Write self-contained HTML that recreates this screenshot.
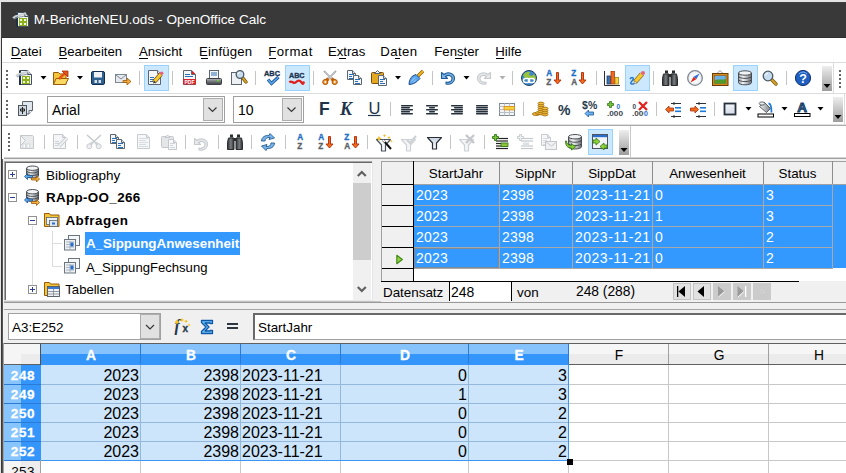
<!DOCTYPE html>
<html><head><meta charset="utf-8">
<style>
*{margin:0;padding:0;box-sizing:border-box}
html,body{width:846px;height:473px;overflow:hidden;background:#e4e4e4;font-family:"Liberation Sans",sans-serif;color:#000}
.a{position:absolute}
.t{position:absolute;white-space:pre;line-height:1}
svg.ov{position:absolute;left:0;top:0;width:846px;height:473px;overflow:visible}
</style></head><body>
<div class="a" style="left:0px;top:0px;width:846px;height:473px;background:#e4e4e4;"></div>
<div class="a" style="left:1px;top:2px;width:845px;height:471px;background:#404040;"></div>
<div class="a" style="left:2px;top:3px;width:844px;height:34px;background:#393939;"></div>
<div class="a" style="left:2px;top:37px;width:844px;height:1px;background:#2e2e2e;"></div>
<div class="t" style="left:33.8px;top:13.29px;font-size:13.6px;font-weight:400;color:#ffffff;letter-spacing:0.02px;">M-BerichteNEU.ods - OpenOffice Calc</div>
<div class="a" style="left:2px;top:38px;width:844px;height:435px;background:#ffffff;"></div>
<div id="menu">
<div class="t" style="left:10.8px;top:44.73px;font-size:13.2px;font-weight:400;color:#000;">Datei</div>
<div class="t" style="left:58.4px;top:44.73px;font-size:13.2px;font-weight:400;color:#000;">Bearbeiten</div>
<div class="t" style="left:138.9px;top:44.73px;font-size:13.2px;font-weight:400;color:#000;">Ansicht</div>
<div class="t" style="left:199px;top:44.73px;font-size:13.2px;font-weight:400;color:#000;letter-spacing:0.15px;">Einfügen</div>
<div class="t" style="left:268.3px;top:44.73px;font-size:13.2px;font-weight:400;color:#000;letter-spacing:0.45px;">Format</div>
<div class="t" style="left:327.9px;top:44.73px;font-size:13.2px;font-weight:400;color:#000;">Extras</div>
<div class="t" style="left:380.3px;top:44.73px;font-size:13.2px;font-weight:400;color:#000;letter-spacing:0.4px;">Daten</div>
<div class="t" style="left:434.3px;top:44.73px;font-size:13.2px;font-weight:400;color:#000;">Fenster</div>
<div class="t" style="left:495.3px;top:44.73px;font-size:13.2px;font-weight:400;color:#000;">Hilfe</div>
</div>
<div class="a" style="left:11px;top:57.5px;width:10px;height:1px;background:#000;"></div>
<div class="a" style="left:58.5px;top:57.5px;width:8.0px;height:1px;background:#000;"></div>
<div class="a" style="left:139px;top:57.5px;width:8.5px;height:1px;background:#000;"></div>
<div class="a" style="left:200.5px;top:57.5px;width:7.0px;height:1px;background:#000;"></div>
<div class="a" style="left:269px;top:57.5px;width:7px;height:1px;background:#000;"></div>
<div class="a" style="left:339px;top:57.5px;width:7px;height:1px;background:#000;"></div>
<div class="a" style="left:395px;top:57.5px;width:5px;height:1px;background:#000;"></div>
<div class="a" style="left:455px;top:57.5px;width:7px;height:1px;background:#000;"></div>
<div class="a" style="left:495.5px;top:57.5px;width:8.5px;height:1px;background:#000;"></div>
<div class="a" style="left:2px;top:62px;width:844px;height:1px;background:#dcdcdc;"></div>
<div class="a" style="left:2px;top:93px;width:844px;height:1px;background:#dcdcdc;"></div>
<div class="a" style="left:2px;top:124px;width:844px;height:1px;background:#e0e0e0;"></div>
<div class="a" style="left:2px;top:125px;width:844px;height:1px;background:#ababab;"></div>
<div class="a" style="left:4px;top:157px;width:842px;height:1px;background:#d4d4d4;"></div>
<div class="a" style="left:4px;top:158px;width:842px;height:1px;background:#a0a0a0;"></div>
<div class="a" style="left:833px;top:63px;width:1px;height:30px;background:#dcdcdc;"></div>
<div class="a" style="left:844px;top:94px;width:1px;height:30px;background:#dcdcdc;"></div>
<div class="a" style="left:630px;top:126px;width:1px;height:31px;background:#c8c8c8;"></div>
<div class="a" style="left:6px;top:70px;width:2px;height:2px;background:#666;"></div>
<div class="a" style="left:6px;top:74px;width:2px;height:2px;background:#666;"></div>
<div class="a" style="left:6px;top:78px;width:2px;height:2px;background:#666;"></div>
<div class="a" style="left:6px;top:82px;width:2px;height:2px;background:#666;"></div>
<div class="a" style="left:6px;top:86px;width:2px;height:2px;background:#666;"></div>
<div class="a" style="left:839px;top:70px;width:2px;height:2px;background:#666;"></div>
<div class="a" style="left:839px;top:74px;width:2px;height:2px;background:#666;"></div>
<div class="a" style="left:839px;top:78px;width:2px;height:2px;background:#666;"></div>
<div class="a" style="left:839px;top:82px;width:2px;height:2px;background:#666;"></div>
<div class="a" style="left:839px;top:86px;width:2px;height:2px;background:#666;"></div>
<div class="a" style="left:6px;top:100px;width:2px;height:2px;background:#666;"></div>
<div class="a" style="left:6px;top:104px;width:2px;height:2px;background:#666;"></div>
<div class="a" style="left:6px;top:108px;width:2px;height:2px;background:#666;"></div>
<div class="a" style="left:6px;top:112px;width:2px;height:2px;background:#666;"></div>
<div class="a" style="left:6px;top:116px;width:2px;height:2px;background:#666;"></div>
<div class="a" style="left:8px;top:133px;width:2px;height:2px;background:#666;"></div>
<div class="a" style="left:8px;top:137px;width:2px;height:2px;background:#666;"></div>
<div class="a" style="left:8px;top:141px;width:2px;height:2px;background:#666;"></div>
<div class="a" style="left:8px;top:145px;width:2px;height:2px;background:#666;"></div>
<div class="a" style="left:8px;top:149px;width:2px;height:2px;background:#666;"></div>
<div class="a" style="left:144px;top:65px;width:25px;height:26px;background:#cce8ff;border:1px solid #99d1ff"></div>
<div class="a" style="left:285px;top:65px;width:25px;height:26px;background:#cce8ff;border:1px solid #99d1ff"></div>
<div class="a" style="left:625px;top:65px;width:25px;height:26px;background:#cce8ff;border:1px solid #99d1ff"></div>
<div class="a" style="left:733px;top:65px;width:25px;height:26px;background:#cce8ff;border:1px solid #99d1ff"></div>
<div class="a" style="left:139px;top:71px;width:1px;height:14px;background:#c4c4c4;"></div>
<div class="a" style="left:172px;top:71px;width:1px;height:14px;background:#c4c4c4;"></div>
<div class="a" style="left:255px;top:71px;width:1px;height:14px;background:#c4c4c4;"></div>
<div class="a" style="left:313px;top:71px;width:1px;height:14px;background:#c4c4c4;"></div>
<div class="a" style="left:432px;top:71px;width:1px;height:14px;background:#c4c4c4;"></div>
<div class="a" style="left:512px;top:71px;width:1px;height:14px;background:#c4c4c4;"></div>
<div class="a" style="left:596px;top:71px;width:1px;height:14px;background:#c4c4c4;"></div>
<div class="a" style="left:653px;top:71px;width:1px;height:14px;background:#c4c4c4;"></div>
<div class="a" style="left:786px;top:71px;width:1px;height:14px;background:#c4c4c4;"></div>
<div class="a" style="left:822px;top:66px;width:10px;height:25px;background:linear-gradient(#eeeeee,#9c9c9c)"></div>
<div class="a" style="left:47px;top:96px;width:178px;height:27px;border:1px solid #a0a0a0;background:#fff"></div>
<div class="a" style="left:203px;top:98px;width:20px;height:23px;border:1px solid #adadad;background:#e1e1e1"></div>
<div class="t" style="left:52px;top:102.65px;font-size:14px;font-weight:400;color:#000;">Arial</div>
<div class="a" style="left:233px;top:96px;width:71px;height:27px;border:1px solid #a0a0a0;background:#fff"></div>
<div class="a" style="left:282px;top:98px;width:20px;height:23px;border:1px solid #adadad;background:#e1e1e1"></div>
<div class="t" style="left:238px;top:102.65px;font-size:14px;font-weight:400;color:#000;">10</div>
<div class="a" style="left:390px;top:102px;width:1px;height:14px;background:#c4c4c4;"></div>
<div class="a" style="left:523px;top:102px;width:1px;height:14px;background:#c4c4c4;"></div>
<div class="a" style="left:656px;top:102px;width:1px;height:14px;background:#c4c4c4;"></div>
<div class="a" style="left:714px;top:102px;width:1px;height:14px;background:#c4c4c4;"></div>
<div class="a" style="left:833px;top:97px;width:10px;height:25px;background:linear-gradient(#eeeeee,#9c9c9c)"></div>
<div class="a" style="left:588px;top:129px;width:25px;height:26px;background:#cce8ff;border:1px solid #99d1ff"></div>
<div class="a" style="left:44px;top:135px;width:1px;height:14px;background:#c4c4c4;"></div>
<div class="a" style="left:77px;top:135px;width:1px;height:14px;background:#c4c4c4;"></div>
<div class="a" style="left:185px;top:135px;width:1px;height:14px;background:#c4c4c4;"></div>
<div class="a" style="left:218px;top:135px;width:1px;height:14px;background:#c4c4c4;"></div>
<div class="a" style="left:251px;top:135px;width:1px;height:14px;background:#c4c4c4;"></div>
<div class="a" style="left:285px;top:135px;width:1px;height:14px;background:#c4c4c4;"></div>
<div class="a" style="left:367px;top:135px;width:1px;height:14px;background:#c4c4c4;"></div>
<div class="a" style="left:450px;top:135px;width:1px;height:14px;background:#c4c4c4;"></div>
<div class="a" style="left:484px;top:135px;width:1px;height:14px;background:#c4c4c4;"></div>
<div class="a" style="left:619px;top:130px;width:10px;height:25px;background:linear-gradient(#eeeeee,#9c9c9c)"></div>
<div class="a" style="left:3px;top:159px;width:843px;height:149px;background:#f0f0f0;"></div>
<div class="a" style="left:4px;top:161px;width:369px;height:140px;background:#e6e6e6;"></div>
<div class="a" style="left:4px;top:161px;width:368px;height:139px;background:#a8a8a8;"></div>
<div class="a" style="left:5px;top:162px;width:367px;height:138px;background:#696969;"></div>
<div class="a" style="left:6px;top:163px;width:366px;height:137px;background:#ffffff;"></div>
<div class="a" style="left:353px;top:163px;width:18px;height:137px;background:#f0f0f0;"></div>
<div class="a" style="left:353px;top:183px;width:18px;height:77px;background:#cdcdcd;"></div>
<div class="a" style="left:373px;top:159px;width:8px;height:149px;background:#f0f0f0;"></div>
<div class="a" style="left:3px;top:301px;width:843px;height:1px;background:#c4c4c4;"></div>
<div class="a" style="left:3px;top:302px;width:843px;height:1px;background:#999999;"></div>
<div class="a" style="left:3px;top:309px;width:843px;height:1px;background:#a4a4a4;"></div>
<div class="t" style="left:45.9px;top:168.57px;font-size:13.5px;font-weight:400;color:#000;">Bibliography</div>
<div class="t" style="left:45.9px;top:190.96px;font-size:13.4px;font-weight:700;color:#000;letter-spacing:0.35px;">RApp-OO_266</div>
<div class="t" style="left:65.4px;top:214.26px;font-size:13.4px;font-weight:700;color:#000;letter-spacing:0.55px;">Abfragen</div>
<div class="a" style="left:84.7px;top:232px;width:155px;height:23px;background:#3399ff;"></div>
<div class="a" style="left:84.7px;top:232px;width:155px;height:23px;overflow:hidden">
<div class="t" style="left:1.2px;top:5.26px;font-size:13.4px;font-weight:700;color:#fff">A_SippungAnwesenheit</div>
</div>
<div class="t" style="left:85.9px;top:260.61px;font-size:13.1px;font-weight:400;color:#000;">A_SippungFechsung</div>
<div class="t" style="left:65.3px;top:282.91px;font-size:13.1px;font-weight:400;color:#000;">Tabellen</div>
<div class="a" style="left:8px;top:170px;width:9px;height:9px;border:1px solid #919191;background:#fff"></div>
<div class="a" style="left:8px;top:193px;width:9px;height:9px;border:1px solid #919191;background:#fff"></div>
<div class="a" style="left:28px;top:216px;width:9px;height:9px;border:1px solid #919191;background:#fff"></div>
<div class="a" style="left:28px;top:285px;width:9px;height:9px;border:1px solid #919191;background:#fff"></div>
<div class="a" style="left:381px;top:161px;width:465px;height:120px;background:#ffffff;"></div>
<div class="a" style="left:381px;top:161px;width:465px;height:23px;background:#f0f0f0;"></div>
<div class="a" style="left:381px;top:161px;width:32px;height:120px;background:#f0f0f0;"></div>
<div class="a" style="left:413px;top:184px;width:433px;height:21px;background:#3399ff;"></div>
<div class="a" style="left:413px;top:205px;width:433px;height:21px;background:#3399ff;"></div>
<div class="a" style="left:413px;top:226px;width:433px;height:21px;background:#3399ff;"></div>
<div class="a" style="left:413px;top:247px;width:433px;height:21px;background:#3399ff;"></div>
<div id="gridlines">
<div class="a" style="left:381px;top:161px;width:465px;height:1px;background:#a0a0a0;"></div>
<div class="a" style="left:381px;top:184px;width:465px;height:1px;background:#a0a0a0;"></div>
<div class="a" style="left:381px;top:184px;width:32px;height:1px;background:#000;"></div>
<div class="a" style="left:381px;top:205px;width:452px;height:1px;background:#a8a8a8;"></div>
<div class="a" style="left:381px;top:205px;width:32px;height:1px;background:#000;"></div>
<div class="a" style="left:381px;top:226px;width:452px;height:1px;background:#a8a8a8;"></div>
<div class="a" style="left:381px;top:226px;width:32px;height:1px;background:#000;"></div>
<div class="a" style="left:381px;top:247px;width:452px;height:1px;background:#a8a8a8;"></div>
<div class="a" style="left:381px;top:247px;width:32px;height:1px;background:#000;"></div>
<div class="a" style="left:381px;top:268px;width:452px;height:1px;background:#a8a8a8;"></div>
<div class="a" style="left:381px;top:268px;width:32px;height:1px;background:#000;"></div>
<div class="a" style="left:413px;top:161px;width:1px;height:23px;background:#8c8c8c;"></div>
<div class="a" style="left:413px;top:184px;width:1px;height:84px;background:#a8a8a8;"></div>
<div class="a" style="left:499px;top:161px;width:1px;height:23px;background:#8c8c8c;"></div>
<div class="a" style="left:499px;top:184px;width:1px;height:84px;background:#a8a8a8;"></div>
<div class="a" style="left:572px;top:161px;width:1px;height:23px;background:#8c8c8c;"></div>
<div class="a" style="left:572px;top:184px;width:1px;height:84px;background:#a8a8a8;"></div>
<div class="a" style="left:652px;top:161px;width:1px;height:23px;background:#8c8c8c;"></div>
<div class="a" style="left:652px;top:184px;width:1px;height:84px;background:#a8a8a8;"></div>
<div class="a" style="left:763px;top:161px;width:1px;height:23px;background:#8c8c8c;"></div>
<div class="a" style="left:763px;top:184px;width:1px;height:84px;background:#a8a8a8;"></div>
<div class="a" style="left:832px;top:161px;width:1px;height:23px;background:#8c8c8c;"></div>
<div class="a" style="left:832px;top:184px;width:1px;height:84px;background:#a8a8a8;"></div>
<div class="a" style="left:381px;top:161px;width:1px;height:120px;background:#a0a0a0;"></div>
<div class="a" style="left:413px;top:161px;width:1px;height:120px;background:#000;"></div>
</div>
<div class="t" style="left:413px;top:166.66px;width:86px;text-align:center;font-size:13.4px">StartJahr</div>
<div class="t" style="left:499px;top:166.66px;width:73px;text-align:center;font-size:13.4px">SippNr</div>
<div class="t" style="left:572px;top:166.66px;width:80px;text-align:center;font-size:13.4px">SippDat</div>
<div class="t" style="left:652px;top:166.66px;width:111px;text-align:center;font-size:13.4px">Anwesenheit</div>
<div class="t" style="left:763px;top:166.66px;width:69px;text-align:center;font-size:13.4px">Status</div>
<div class="t" style="left:416px;top:188.15px;font-size:14px;font-weight:400;color:#fff;letter-spacing:0.2px;">2023</div>
<div class="t" style="left:502px;top:188.15px;font-size:14px;font-weight:400;color:#fff;letter-spacing:0.2px;">2398</div>
<div class="t" style="left:575px;top:188.15px;font-size:14px;font-weight:400;color:#fff;letter-spacing:0.5px;">2023-11-21</div>
<div class="t" style="left:655px;top:188.15px;font-size:14px;font-weight:400;color:#fff;letter-spacing:0.2px;">0</div>
<div class="t" style="left:766px;top:188.15px;font-size:14px;font-weight:400;color:#fff;letter-spacing:0.2px;">3</div>
<div class="t" style="left:416px;top:209.15px;font-size:14px;font-weight:400;color:#fff;letter-spacing:0.2px;">2023</div>
<div class="t" style="left:502px;top:209.15px;font-size:14px;font-weight:400;color:#fff;letter-spacing:0.2px;">2398</div>
<div class="t" style="left:575px;top:209.15px;font-size:14px;font-weight:400;color:#fff;letter-spacing:0.5px;">2023-11-21</div>
<div class="t" style="left:655px;top:209.15px;font-size:14px;font-weight:400;color:#fff;letter-spacing:0.2px;">1</div>
<div class="t" style="left:766px;top:209.15px;font-size:14px;font-weight:400;color:#fff;letter-spacing:0.2px;">3</div>
<div class="t" style="left:416px;top:230.15px;font-size:14px;font-weight:400;color:#fff;letter-spacing:0.2px;">2023</div>
<div class="t" style="left:502px;top:230.15px;font-size:14px;font-weight:400;color:#fff;letter-spacing:0.2px;">2398</div>
<div class="t" style="left:575px;top:230.15px;font-size:14px;font-weight:400;color:#fff;letter-spacing:0.5px;">2023-11-21</div>
<div class="t" style="left:655px;top:230.15px;font-size:14px;font-weight:400;color:#fff;letter-spacing:0.2px;">0</div>
<div class="t" style="left:766px;top:230.15px;font-size:14px;font-weight:400;color:#fff;letter-spacing:0.2px;">2</div>
<div class="t" style="left:416px;top:251.15px;font-size:14px;font-weight:400;color:#fff;letter-spacing:0.2px;">2023</div>
<div class="t" style="left:502px;top:251.15px;font-size:14px;font-weight:400;color:#fff;letter-spacing:0.2px;">2398</div>
<div class="t" style="left:575px;top:251.15px;font-size:14px;font-weight:400;color:#fff;letter-spacing:0.5px;">2023-11-21</div>
<div class="t" style="left:655px;top:251.15px;font-size:14px;font-weight:400;color:#fff;letter-spacing:0.2px;">0</div>
<div class="t" style="left:766px;top:251.15px;font-size:14px;font-weight:400;color:#fff;letter-spacing:0.2px;">2</div>
<div class="a" style="left:381px;top:282px;width:465px;height:20px;background:#f0f0f0;"></div>
<div class="a" style="left:381px;top:281px;width:418px;height:1px;background:#000;"></div>
<div class="t" style="left:383px;top:285.66px;font-size:13.4px;font-weight:400;color:#000;">Datensatz</div>
<div class="a" style="left:449px;top:282px;width:63px;height:19px;border-left:1px solid #000;border-right:1px solid #000;background:#fff"></div>
<div class="t" style="left:451px;top:285.15px;font-size:14px;font-weight:400;color:#000;">248</div>
<div class="t" style="left:517px;top:285.66px;font-size:13.4px;font-weight:400;color:#000;">von</div>
<div class="t" style="left:576px;top:285.32px;font-size:13.8px;font-weight:400;color:#000;">248 (288)</div>
<div class="a" style="left:673px;top:283px;width:18px;height:17px;background:#e1e1e1;border:1px solid #c4c4c4"></div>
<div class="a" style="left:693px;top:283px;width:18px;height:17px;background:#e1e1e1;border:1px solid #c4c4c4"></div>
<div class="a" style="left:713px;top:283px;width:18px;height:17px;background:#cbcbcb"></div>
<div class="a" style="left:733px;top:283px;width:18px;height:17px;background:#cbcbcb"></div>
<div class="a" style="left:753px;top:283px;width:18px;height:17px;background:#cbcbcb"></div>
<div class="a" style="left:3px;top:303px;width:843px;height:6px;background:#f0f0f0;"></div>
<div class="a" style="left:3px;top:310px;width:843px;height:34px;background:#f0f0f0;"></div>
<div class="a" style="left:8px;top:313px;width:153px;height:27px;border:1px solid #a0a0a0;background:#fff"></div>
<div class="a" style="left:140px;top:314px;width:20px;height:25px;border:1px solid #adadad;background:#e1e1e1"></div>
<div class="t" style="left:12px;top:320.66px;font-size:13.4px;font-weight:400;color:#000;">A3:E252</div>
<div class="a" style="left:253px;top:313px;width:600px;height:27px;border:1px solid #a0a0a0;border-left:2px solid #696969;border-top:2px solid #696969;background:#fff"></div>
<div class="t" style="left:258px;top:320.66px;font-size:13.4px;font-weight:400;color:#000;">StartJahr</div>
<div class="a" style="left:3px;top:344px;width:843px;height:129px;background:#ffffff;"></div>
<div class="a" style="left:41px;top:344px;width:100px;height:10px;background:#86c3fd;"></div>
<div class="a" style="left:41px;top:354px;width:100px;height:11px;background:#3496fa;"></div>
<div class="a" style="left:141px;top:344px;width:100px;height:10px;background:#86c3fd;"></div>
<div class="a" style="left:141px;top:354px;width:100px;height:11px;background:#3496fa;"></div>
<div class="a" style="left:241px;top:344px;width:100px;height:10px;background:#86c3fd;"></div>
<div class="a" style="left:241px;top:354px;width:100px;height:11px;background:#3496fa;"></div>
<div class="a" style="left:341px;top:344px;width:128px;height:10px;background:#86c3fd;"></div>
<div class="a" style="left:341px;top:354px;width:128px;height:11px;background:#3496fa;"></div>
<div class="a" style="left:469px;top:344px;width:100px;height:10px;background:#86c3fd;"></div>
<div class="a" style="left:469px;top:354px;width:100px;height:11px;background:#3496fa;"></div>
<div class="a" style="left:569px;top:344px;width:100px;height:10px;background:#f6f6f6;"></div>
<div class="a" style="left:569px;top:354px;width:100px;height:11px;background:#ebebeb;"></div>
<div class="a" style="left:669px;top:344px;width:100px;height:10px;background:#f6f6f6;"></div>
<div class="a" style="left:669px;top:354px;width:100px;height:11px;background:#ebebeb;"></div>
<div class="a" style="left:769px;top:344px;width:100px;height:10px;background:#f6f6f6;"></div>
<div class="a" style="left:769px;top:354px;width:100px;height:11px;background:#ebebeb;"></div>
<div class="a" style="left:4px;top:344px;width:37px;height:21px;background:#f5f5f5;"></div>
<div class="a" style="left:21px;top:354px;width:20px;height:11px;background:#ececec;"></div>
<div class="a" style="left:4px;top:365px;width:17px;height:20px;background:#88c4fd;"></div>
<div class="a" style="left:21px;top:365px;width:20px;height:20px;background:#3496fa;"></div>
<div class="a" style="left:41px;top:365px;width:528px;height:20px;background:#cde5fb;"></div>
<div class="a" style="left:4px;top:384px;width:17px;height:20px;background:#88c4fd;"></div>
<div class="a" style="left:21px;top:384px;width:20px;height:20px;background:#3496fa;"></div>
<div class="a" style="left:41px;top:384px;width:528px;height:20px;background:#cde5fb;"></div>
<div class="a" style="left:4px;top:403px;width:17px;height:20px;background:#88c4fd;"></div>
<div class="a" style="left:21px;top:403px;width:20px;height:20px;background:#3496fa;"></div>
<div class="a" style="left:41px;top:403px;width:528px;height:20px;background:#cde5fb;"></div>
<div class="a" style="left:4px;top:422px;width:17px;height:20px;background:#88c4fd;"></div>
<div class="a" style="left:21px;top:422px;width:20px;height:20px;background:#3496fa;"></div>
<div class="a" style="left:41px;top:422px;width:528px;height:20px;background:#cde5fb;"></div>
<div class="a" style="left:4px;top:441px;width:17px;height:20px;background:#88c4fd;"></div>
<div class="a" style="left:21px;top:441px;width:20px;height:20px;background:#3496fa;"></div>
<div class="a" style="left:41px;top:441px;width:528px;height:20px;background:#cde5fb;"></div>
<div class="a" style="left:4px;top:460px;width:17px;height:19px;background:#f5f5f5;"></div>
<div class="a" style="left:21px;top:460px;width:20px;height:19px;background:#ececec;"></div>
<div class="a" style="left:140px;top:344px;width:1px;height:21px;background:#2a7ad6;"></div>
<div class="a" style="left:240px;top:344px;width:1px;height:21px;background:#2a7ad6;"></div>
<div class="a" style="left:340px;top:344px;width:1px;height:21px;background:#2a7ad6;"></div>
<div class="a" style="left:468px;top:344px;width:1px;height:21px;background:#2a7ad6;"></div>
<div class="a" style="left:568px;top:344px;width:1px;height:21px;background:#2a7ad6;"></div>
<div class="a" style="left:668px;top:344px;width:1px;height:21px;background:#a0a0a0;"></div>
<div class="a" style="left:768px;top:344px;width:1px;height:21px;background:#a0a0a0;"></div>
<div class="a" style="left:140px;top:365px;width:1px;height:96px;background:#94b8dc;"></div>
<div class="a" style="left:140px;top:461px;width:1px;height:12px;background:#c8c8c8;"></div>
<div class="a" style="left:240px;top:365px;width:1px;height:96px;background:#94b8dc;"></div>
<div class="a" style="left:240px;top:461px;width:1px;height:12px;background:#c8c8c8;"></div>
<div class="a" style="left:340px;top:365px;width:1px;height:96px;background:#94b8dc;"></div>
<div class="a" style="left:340px;top:461px;width:1px;height:12px;background:#c8c8c8;"></div>
<div class="a" style="left:468px;top:365px;width:1px;height:96px;background:#94b8dc;"></div>
<div class="a" style="left:468px;top:461px;width:1px;height:12px;background:#c8c8c8;"></div>
<div class="a" style="left:568px;top:365px;width:1px;height:96px;background:#94b8dc;"></div>
<div class="a" style="left:568px;top:461px;width:1px;height:12px;background:#c8c8c8;"></div>
<div class="a" style="left:668px;top:365px;width:1px;height:96px;background:#c8c8c8;"></div>
<div class="a" style="left:668px;top:461px;width:1px;height:12px;background:#c8c8c8;"></div>
<div class="a" style="left:768px;top:365px;width:1px;height:96px;background:#c8c8c8;"></div>
<div class="a" style="left:768px;top:461px;width:1px;height:12px;background:#c8c8c8;"></div>
<div class="a" style="left:868px;top:365px;width:1px;height:96px;background:#c8c8c8;"></div>
<div class="a" style="left:868px;top:461px;width:1px;height:12px;background:#c8c8c8;"></div>
<div class="a" style="left:41px;top:384px;width:528px;height:1px;background:#94b8dc;"></div>
<div class="a" style="left:569px;top:384px;width:277px;height:1px;background:#c8c8c8;"></div>
<div class="a" style="left:4px;top:384px;width:37px;height:1px;background:#2a7ad6;"></div>
<div class="a" style="left:41px;top:403px;width:528px;height:1px;background:#94b8dc;"></div>
<div class="a" style="left:569px;top:403px;width:277px;height:1px;background:#c8c8c8;"></div>
<div class="a" style="left:4px;top:403px;width:37px;height:1px;background:#2a7ad6;"></div>
<div class="a" style="left:41px;top:422px;width:528px;height:1px;background:#94b8dc;"></div>
<div class="a" style="left:569px;top:422px;width:277px;height:1px;background:#c8c8c8;"></div>
<div class="a" style="left:4px;top:422px;width:37px;height:1px;background:#2a7ad6;"></div>
<div class="a" style="left:41px;top:441px;width:528px;height:1px;background:#94b8dc;"></div>
<div class="a" style="left:569px;top:441px;width:277px;height:1px;background:#c8c8c8;"></div>
<div class="a" style="left:4px;top:441px;width:37px;height:1px;background:#2a7ad6;"></div>
<div class="a" style="left:41px;top:460px;width:528px;height:1px;background:#94b8dc;"></div>
<div class="a" style="left:569px;top:460px;width:277px;height:1px;background:#c8c8c8;"></div>
<div class="a" style="left:4px;top:460px;width:37px;height:1px;background:#2a7ad6;"></div>
<div class="a" style="left:3px;top:343px;width:843px;height:1px;background:#606060;"></div>
<div class="a" style="left:4px;top:364px;width:37px;height:1px;background:#606060;"></div>
<div class="a" style="left:41px;top:364px;width:528px;height:1px;background:#3496fa;"></div>
<div class="a" style="left:569px;top:364px;width:277px;height:1px;background:#606060;"></div>
<div class="a" style="left:40px;top:344px;width:1px;height:21px;background:#505050;"></div>
<div class="a" style="left:40px;top:460px;width:1px;height:13px;background:#a0a0a0;"></div>
<div class="a" style="left:568px;top:365px;width:1px;height:96px;background:#3d95f5;"></div>
<div class="a" style="left:41px;top:460px;width:528px;height:1px;background:#3d95f5;"></div>
<div class="a" style="left:567px;top:459px;width:6px;height:6px;background:#000;"></div>
<div class="t" style="left:41px;top:348.62px;width:100px;text-align:center;font-size:13.8px;font-weight:700;color:#fff;-webkit-text-stroke:0.3px #fff">A</div>
<div class="t" style="left:141px;top:348.62px;width:100px;text-align:center;font-size:13.8px;font-weight:700;color:#fff;-webkit-text-stroke:0.3px #fff">B</div>
<div class="t" style="left:241px;top:348.62px;width:100px;text-align:center;font-size:13.8px;font-weight:700;color:#fff;-webkit-text-stroke:0.3px #fff">C</div>
<div class="t" style="left:341px;top:348.62px;width:128px;text-align:center;font-size:13.8px;font-weight:700;color:#fff;-webkit-text-stroke:0.3px #fff">D</div>
<div class="t" style="left:469px;top:348.62px;width:100px;text-align:center;font-size:13.8px;font-weight:700;color:#fff;-webkit-text-stroke:0.3px #fff">E</div>
<div class="t" style="left:569px;top:348.62px;width:100px;text-align:center;font-size:13.8px;font-weight:400;color:#000;-webkit-text-stroke:0px #000">F</div>
<div class="t" style="left:669px;top:348.62px;width:100px;text-align:center;font-size:13.8px;font-weight:400;color:#000;-webkit-text-stroke:0px #000">G</div>
<div class="t" style="left:769px;top:348.62px;width:100px;text-align:center;font-size:13.8px;font-weight:400;color:#000;-webkit-text-stroke:0px #000">H</div>
<div class="t" style="left:4.5px;top:369.47px;width:37px;text-align:center;font-size:13.5px;font-weight:700;color:#fff;letter-spacing:0.7px;-webkit-text-stroke:0.3px #fff">248</div>
<div class="t" style="left:4.5px;top:388.47px;width:37px;text-align:center;font-size:13.5px;font-weight:700;color:#fff;letter-spacing:0.7px;-webkit-text-stroke:0.3px #fff">249</div>
<div class="t" style="left:4.5px;top:407.47px;width:37px;text-align:center;font-size:13.5px;font-weight:700;color:#fff;letter-spacing:0.7px;-webkit-text-stroke:0.3px #fff">250</div>
<div class="t" style="left:4.5px;top:426.47px;width:37px;text-align:center;font-size:13.5px;font-weight:700;color:#fff;letter-spacing:0.7px;-webkit-text-stroke:0.3px #fff">251</div>
<div class="t" style="left:4.5px;top:445.47px;width:37px;text-align:center;font-size:13.5px;font-weight:700;color:#fff;letter-spacing:0.7px;-webkit-text-stroke:0.3px #fff">252</div>
<div class="t" style="left:4.5px;top:465.47px;width:37px;text-align:center;font-size:13.5px;font-weight:400;color:#000;letter-spacing:0.3px;-webkit-text-stroke:0px #000">253</div>
<div class="t" style="left:41px;top:368.46px;width:98px;text-align:right;font-size:16px;color:#000">2023</div>
<div class="t" style="left:141px;top:368.46px;width:98px;text-align:right;font-size:16px;color:#000">2398</div>
<div class="t" style="left:242px;top:368.46px;font-size:16px;color:#000">2023-11-21</div>
<div class="t" style="left:341px;top:368.46px;width:126px;text-align:right;font-size:16px;color:#000">0</div>
<div class="t" style="left:469px;top:368.46px;width:98px;text-align:right;font-size:16px;color:#000">3</div>
<div class="t" style="left:41px;top:387.46px;width:98px;text-align:right;font-size:16px;color:#000">2023</div>
<div class="t" style="left:141px;top:387.46px;width:98px;text-align:right;font-size:16px;color:#000">2398</div>
<div class="t" style="left:242px;top:387.46px;font-size:16px;color:#000">2023-11-21</div>
<div class="t" style="left:341px;top:387.46px;width:126px;text-align:right;font-size:16px;color:#000">1</div>
<div class="t" style="left:469px;top:387.46px;width:98px;text-align:right;font-size:16px;color:#000">3</div>
<div class="t" style="left:41px;top:406.46px;width:98px;text-align:right;font-size:16px;color:#000">2023</div>
<div class="t" style="left:141px;top:406.46px;width:98px;text-align:right;font-size:16px;color:#000">2398</div>
<div class="t" style="left:242px;top:406.46px;font-size:16px;color:#000">2023-11-21</div>
<div class="t" style="left:341px;top:406.46px;width:126px;text-align:right;font-size:16px;color:#000">0</div>
<div class="t" style="left:469px;top:406.46px;width:98px;text-align:right;font-size:16px;color:#000">2</div>
<div class="t" style="left:41px;top:425.46px;width:98px;text-align:right;font-size:16px;color:#000">2023</div>
<div class="t" style="left:141px;top:425.46px;width:98px;text-align:right;font-size:16px;color:#000">2398</div>
<div class="t" style="left:242px;top:425.46px;font-size:16px;color:#000">2023-11-21</div>
<div class="t" style="left:341px;top:425.46px;width:126px;text-align:right;font-size:16px;color:#000">0</div>
<div class="t" style="left:469px;top:425.46px;width:98px;text-align:right;font-size:16px;color:#000">2</div>
<div class="t" style="left:41px;top:444.46px;width:98px;text-align:right;font-size:16px;color:#000">2023</div>
<div class="t" style="left:141px;top:444.46px;width:98px;text-align:right;font-size:16px;color:#000">2398</div>
<div class="t" style="left:242px;top:444.46px;font-size:16px;color:#000">2023-11-21</div>
<div class="t" style="left:341px;top:444.46px;width:126px;text-align:right;font-size:16px;color:#000">0</div>
<div class="t" style="left:469px;top:444.46px;width:98px;text-align:right;font-size:16px;color:#000">2</div>
<div class="a" style="left:1px;top:37px;width:1px;height:436px;background:#383838;"></div>
<div class="a" style="left:2px;top:159px;width:1px;height:314px;background:#555555;"></div>
<div class="a" style="left:3px;top:159px;width:1px;height:184px;background:#f0f0f0;"></div>
<div class="a" style="left:3px;top:343px;width:1px;height:130px;background:#a0a0a0;"></div>
<div class="a" style="left:227px;top:323px;width:11px;height:2px;background:#2b3640;"></div>
<div class="a" style="left:227px;top:327px;width:11px;height:2px;background:#2b3640;"></div>
<svg class="ov" width="846" height="473" viewBox="0 0 846 473">
<path d="M823.5 84h7l-3.5 4z" fill="#000"/>
<path d="M40.5 76h6l-3 3.5z" fill="#000"/>
<path d="M77 76h6l-3 3.5z" fill="#000"/>
<path d="M395 76h6l-3 3.5z" fill="#000"/>
<path d="M463.5 76h6l-3 3.5z" fill="#000"/>
<path d="M499.5 76h6l-3 3.5z" fill="#b0b0b0"/>
<path d="M208.5 107.5l4 4 4-4" stroke="#333" stroke-width="1.1" fill="none"/>
<path d="M287.5 107.5l4 4 4-4" stroke="#333" stroke-width="1.1" fill="none"/>
<path d="M745.5 107h6l-3 3.5z" fill="#000"/>
<path d="M781.5 107h6l-3 3.5z" fill="#000"/>
<path d="M817.5 107h6l-3 3.5z" fill="#000"/>
<path d="M834.5 115h7l-3.5 4z" fill="#000"/>
<path d="M620.5 148h7l-3.5 4z" fill="#000"/>
<path d="M357.8 176l4-4 4 4" stroke="#606060" stroke-width="2.2" fill="none"/>
<path d="M357.8 287l4 4 4-4" stroke="#606060" stroke-width="2.2" fill="none"/>
<path d="M10 174.5h5" stroke="#2f3f8f" stroke-width="1"/>
<path d="M12.5 172v5" stroke="#2f3f8f" stroke-width="1"/>
<path d="M10 197.5h5" stroke="#2f3f8f" stroke-width="1"/>
<path d="M30 220.5h5" stroke="#2f3f8f" stroke-width="1"/>
<path d="M30 289.5h5" stroke="#2f3f8f" stroke-width="1"/>
<path d="M32.5 287v5" stroke="#2f3f8f" stroke-width="1"/>
<path d="M52.5 231v36M52 243.5h10M52 266.5h10M32.5 226v59" stroke="#dcdcdc" stroke-width="1"/>
<path d="M396.8 255.3v8.4l5.6-4.2z" fill="#8fd040" stroke="#3f8a18" stroke-width="1.1" stroke-linejoin="round"/>
<rect x="414.5" y="248.5" width="84" height="19" fill="none" stroke="#c87a30" stroke-width="1" stroke-dasharray="1 1"/>
<rect x="677" y="286" width="1.3" height="11" fill="#000"/><path d="M685 286v11l-6.5-5.5z" fill="#000"/>
<path d="M704 286v11l-6.5-5.5z" fill="#000"/>
<path d="M718 286v11l6.5-5.5z" fill="#9a9a9a"/><path d="M718.5 297l6-5.5" stroke="#fff" stroke-width="1"/>
<path d="M737.5 286v11l6.5-5.5z" fill="#9a9a9a"/><path d="M738 297l6-5.5" stroke="#fff" stroke-width="1"/><rect x="745" y="286" width="1.3" height="11" fill="#fff"/>
<circle cx="762" cy="291.5" r="2" fill="none" stroke="#dedede" stroke-width="1" stroke-dasharray="1 1"/>
<path d="M146 325l4 4 4-4" stroke="#333" stroke-width="1.1" fill="none"/>
<defs>
<linearGradient id="gprint" x1="0" y1="0" x2="0" y2="1"><stop offset="0" stop-color="#b8bcc0"/><stop offset=".5" stop-color="#74787c"/><stop offset="1" stop-color="#3a3e42"/></linearGradient>
<linearGradient id="gbino" x1="0" y1="0" x2="1" y2="0"><stop offset="0" stop-color="#2a2c2e"/><stop offset=".5" stop-color="#7a7e82"/><stop offset="1" stop-color="#2a2c2e"/></linearGradient>
<linearGradient id="gdb" x1="0" y1="0" x2="1" y2="0"><stop offset="0" stop-color="#9aa0a6"/><stop offset=".35" stop-color="#f4f5f6"/><stop offset="1" stop-color="#6a7076"/></linearGradient>
<linearGradient id="gbord" x1="0" y1="0" x2="0" y2="1"><stop offset="0" stop-color="#f2f5f8"/><stop offset="1" stop-color="#d4dce6"/></linearGradient>
<linearGradient id="gbuck" x1="0" y1="0" x2="1" y2="0"><stop offset="0" stop-color="#f4f5f6"/><stop offset="1" stop-color="#7a7e82"/></linearGradient>
<linearGradient id="gfun" x1="0" y1="0" x2="0" y2="1"><stop offset="0" stop-color="#c8d4e0"/><stop offset="1" stop-color="#ffffff"/></linearGradient>
</defs>
<g transform="translate(13,12)"><path d="M3.5 0.5h8l4 4v10h-12z" fill="#f4f6f7" stroke="#44505c" stroke-width="1"/><path d="M11.5 0.5v4h4" fill="#dfe4ea" stroke="#44505c" stroke-width="1"/><rect x="3" y="1" width="2" height="14" fill="#1e3048"/><path d="M0 6 C4 2 8 4 13 1" stroke="#c9d0d6" stroke-width="2" fill="none"/><path d="M1 7 C5 4 9 6 13 3" stroke="#8d98a2" stroke-width="1" fill="none"/><rect x="6" y="6" width="8" height="8" fill="#8cb21a"/><rect x="7" y="7" width="2" height="2" fill="#f4f9e4"/><rect x="11" y="7" width="2" height="2" fill="#f4f9e4"/><rect x="7" y="11" width="2" height="2" fill="#f4f9e4"/><rect x="11" y="11" width="2" height="2" fill="#f4f9e4"/></g>
<g transform="translate(16,70)"><path d="M3.5 0.5h8l4 4v10h-12z" fill="#f4f6f7" stroke="#44505c" stroke-width="1"/><path d="M11.5 0.5v4h4" fill="#dfe4ea" stroke="#44505c" stroke-width="1"/><rect x="3" y="1" width="2" height="14" fill="#1e3048"/><path d="M0 6 C4 2 8 4 13 1" stroke="#c9d0d6" stroke-width="2" fill="none"/><path d="M1 7 C5 4 9 6 13 3" stroke="#8d98a2" stroke-width="1" fill="none"/><rect x="6" y="6" width="8" height="8" fill="#8cb21a"/><rect x="7" y="7" width="2" height="2" fill="#f4f9e4"/><rect x="11" y="7" width="2" height="2" fill="#f4f9e4"/><rect x="7" y="11" width="2" height="2" fill="#f4f9e4"/><rect x="11" y="11" width="2" height="2" fill="#f4f9e4"/></g>
<g transform="translate(53,70)"><path d="M0.5 2.5h5l1.5 1.5h6v10.5h-12.5z" fill="#f3c53a" stroke="#9a5a08"/><path d="M3 8.5h12.5l-3 6h-12z" fill="#f8d860" stroke="#9a5a08"/><path d="M6 9 L12 3" stroke="#e4571a" stroke-width="2.6"/><path d="M9 1h6v6z" fill="#e4571a" stroke="#a8280a" stroke-width=".8"/></g>
<g transform="translate(90,70)"><rect x="1.5" y="1.5" width="13" height="13" rx="1.5" fill="#2f6190" stroke="#142f4d"/><rect x="4" y="2" width="8" height="5.5" fill="#eef2f6"/><rect x="4.5" y="10" width="2.5" height="3" fill="#d8e0e8"/><rect x="8.5" y="10" width="2.5" height="3" fill="#d8e0e8"/></g>
<g transform="translate(115,70)"><rect x="0.5" y="4.5" width="11" height="8" fill="#e6eaee" stroke="#7d8892"/><path d="M1 5l5 4 5-4" stroke="#7d8892" fill="none"/><path d="M8 10.5h4v-2.5l4 3.5-4 3.5v-2.5h-4z" fill="#f2a93b" stroke="#9d5b0b" stroke-width=".8"/></g>
<g transform="translate(147,70)"><path d="M1.5 0.5h9l3 3v11h-12z" fill="#f4f6f8" stroke="#5b6670" stroke-width="1"/><path d="M10.5 0.5v3h3" fill="#dfe4ea" stroke="#5b6670" stroke-width="1"/><rect x="3" y="7" width="4" height="1" fill="#2a6fb8"/><rect x="3" y="9" width="5" height="1" fill="#2a6fb8"/><rect x="3" y="11" width="4" height="1" fill="#2a6fb8"/><path d="M7 12L14 4" stroke="#6b4a12" stroke-width="4.4" stroke-linecap="butt"/><path d="M7 12L14 4" stroke="#f5c92e" stroke-width="3.2" stroke-linecap="butt"/><path d="M6 13.5l1-3 2 2z" fill="#333"/><circle cx="14.6" cy="3.3" r="1.8" fill="#e5647a"/></g>
<g transform="translate(182,70)"><path d="M1.5 0.5h8l4 4v10h-12z" fill="#f4f6f8" stroke="#5b6670" stroke-width="1"/><path d="M9.5 0.5v4h4" fill="#dfe4ea" stroke="#5b6670" stroke-width="1"/><path d="M10 0.5l3.5 3.5h-3.5z" fill="#d9242b"/><rect x="3" y="4" width="5" height="1" fill="#2a6fb8"/><rect x="3" y="6" width="8" height="1" fill="#2a6fb8"/><rect x="1" y="9" width="13" height="5.5" fill="#d9242b"/><text x="7.5" y="13.6" font-family="Liberation Sans" font-weight="700" font-size="5" fill="#fff" text-anchor="middle">PDF</text></g>
<g transform="translate(206,70)"><rect x="3.5" y="0.5" width="9" height="8" fill="#f4f6f8" stroke="#5b6670"/><rect x="5" y="2.5" width="6" height="1" fill="#2a6fb8"/><rect x="5" y="4.5" width="6" height="1" fill="#2a6fb8"/><rect x="0.5" y="8.5" width="15" height="6" rx="1" fill="url(#gprint)" stroke="#3b3f44"/><rect x="11" y="10" width="2" height="1.6" fill="#5fd12a"/></g>
<g transform="translate(231,70)"><rect x="0.5" y="2.5" width="10" height="12" fill="#eef1f4" stroke="#5b6670"/><path d="M9 4.5L15 12" stroke="#6d4d0e" stroke-width="3.4" stroke-linecap="round"/><path d="M9 4.5L15 12" stroke="#d8a520" stroke-width="2" stroke-linecap="round"/><circle cx="9" cy="4.5" r="3.8" fill="#c7dcef" stroke="#4d5a66" stroke-width="1.3"/><path d="M6.91 4.12a2.28 2.28 0 0 1 1.9 -1.71" stroke="#fff" stroke-width="1" fill="none"/></g>
<g transform="translate(264,70)"><text x="0" y="6" font-family="Liberation Sans" font-weight="700" font-size="7.4" fill="#1b3450" stroke="#1b3450" stroke-width=".35" textLength="16" lengthAdjust="spacingAndGlyphs">ABC</text><path d="M4 9.5l3.5 4 7-6.5" stroke="#174f8f" stroke-width="3.2" fill="none"/><path d="M4 9.5l3.5 4 7-6.5" stroke="#5aa8ee" stroke-width="1.6" fill="none"/></g>
<g transform="translate(289,70)"><text x="0" y="7.5" font-family="Liberation Sans" font-weight="700" font-size="7.4" fill="#1b3450" stroke="#1b3450" stroke-width=".35" textLength="15.5" lengthAdjust="spacingAndGlyphs">ABC</text><path d="M0.5 12.5c2-3 4 2 6 0s4-3 6 0s2 0 2.5-1" stroke="#e0201c" stroke-width="2.3" fill="none"/></g>
<g transform="translate(322,70)"><path d="M2 1L11 10M14 1L5 10" stroke="#8a9096" stroke-width="1.6"/><path d="M2.5 1.5L10 9M13.5 1.5L6 9" stroke="#e3e6e9" stroke-width=".6"/><path d="M9.5 8.5L13.5 12.5M6.5 8.5L2.5 12.5" stroke="#c9650c" stroke-width="3.2"/><circle cx="3.3" cy="12" r="2.6" fill="#f0962e" stroke="#a54e06" stroke-width=".9"/><circle cx="12.7" cy="12" r="2.6" fill="#f0962e" stroke="#a54e06" stroke-width=".9"/><circle cx="3.3" cy="12" r=".9" fill="#fff"/><circle cx="12.7" cy="12" r=".9" fill="#fff"/></g>
<g transform="translate(347,70)"><path d="M0.5 0.5h5l3 3v6h-8z" fill="#f4f6f8" stroke="#5b6670" stroke-width="1"/><path d="M5.5 0.5v3h3" fill="#dfe4ea" stroke="#5b6670" stroke-width="1"/><rect x="2" y="4" width="5" height="1" fill="#2a6fb8"/><rect x="2" y="6" width="3" height="1" fill="#2a6fb8"/><rect x="2" y="8" width="5" height="1" fill="#2a6fb8"/><path d="M6.5 5.5h5l3 3v6h-8z" fill="#f4f6f8" stroke="#5b6670" stroke-width="1"/><path d="M11.5 5.5v3h3" fill="#dfe4ea" stroke="#5b6670" stroke-width="1"/><rect x="8" y="9" width="5" height="1" fill="#2a6fb8"/><rect x="8" y="11" width="3" height="1" fill="#2a6fb8"/><rect x="8" y="13" width="5" height="1" fill="#2a6fb8"/></g>
<g transform="translate(371,70)"><rect x="0.5" y="2.5" width="12" height="11" rx="1" fill="#e3a923" stroke="#7b4d0a"/><path d="M3.5 3.5l3-3 3 3z" fill="#eef0f2" stroke="#5b6670"/><path d="M7.5 5.5h5l3 3v7h-8z" fill="#f4f6f8" stroke="#5b6670" stroke-width="1"/><path d="M12.5 5.5v3h3" fill="#dfe4ea" stroke="#5b6670" stroke-width="1"/><rect x="9" y="9" width="5" height="1" fill="#2a6fb8"/><rect x="9" y="11" width="3" height="1" fill="#2a6fb8"/><rect x="9" y="13" width="5" height="1" fill="#2a6fb8"/></g>
<g transform="translate(408,70)"><path d="M10 6L15 1" stroke="#8a5a08" stroke-width="3.4"/><path d="M10 6L15 1" stroke="#f0b51f" stroke-width="2"/><path d="M8 4.5l4 4-2.5 2.5c-2 2-5 3.5-8.5 3.5c0-3.5 1.5-6.5 3.5-8.5z" fill="#5aa3ea" stroke="#1f4f8c"/><path d="M3 11.5l4-4M5 12.5l3-3" stroke="#b9dcff" stroke-width=".8"/></g>
<g transform="translate(440,68)"><path d="M1.5 4.5v6h6l-2-2c3-2.5 7-0.5 6.5 2.5c-.4 2.5-3 4-6 3v2c4.5 1 8.5-1.5 8.5-5.5c0-5-6.5-7.5-10.5-4z" fill="#7ab4e6" stroke="#1f5b98" stroke-width="1.1" stroke-linejoin="round"/></g>
<g transform="translate(476,68)"><g transform="translate(16,0) scale(-1,1)"><path d="M1.5 4.5v6h6l-2-2c3-2.5 7-0.5 6.5 2.5c-.4 2.5-3 4-6 3v2c4.5 1 8.5-1.5 8.5-5.5c0-5-6.5-7.5-10.5-4z" fill="#e7e9eb" stroke="#c6cacd" stroke-width="1.1" stroke-linejoin="round"/></g></g>
<g transform="translate(521,70)"><circle cx="8" cy="8" r="7.5" fill="#3f86c9" stroke="#1d3f66"/><path d="M2 5c2-3 5-4 7-3l-1 3 3 1 2-2c1 1 2 3 2 5l-3 1-2-2-4 1-3-2z" fill="#96c33a"/><rect x="2.5" y="8.5" width="6" height="4" rx="2" fill="none" stroke="#fff" stroke-width="1.6"/><rect x="7.5" y="8.5" width="6" height="4" rx="2" fill="none" stroke="#fff" stroke-width="1.6"/></g>
<g transform="translate(546,70)"><text x="0.3" y="6.3" font-family="Liberation Sans" font-weight="700" font-size="8.2" fill="#1f6fc8" stroke="#1f6fc8" stroke-width=".3">A</text><text x="0.3" y="15.4" font-family="Liberation Sans" font-weight="700" font-size="8.2" fill="#5b6268" stroke="#5b6268" stroke-width=".3">Z</text><path d="M10.5 2.5h2v7.5h2.5l-3.5 4-3.5-4h2.5z" fill="#f26a1b" stroke="#b02a08" stroke-width=".9" stroke-linejoin="round"/></g>
<g transform="translate(571,70)"><text x="0.3" y="6.3" font-family="Liberation Sans" font-weight="700" font-size="8.2" fill="#1f6fc8" stroke="#1f6fc8" stroke-width=".3">Z</text><text x="0.3" y="15.4" font-family="Liberation Sans" font-weight="700" font-size="8.2" fill="#5b6268" stroke="#5b6268" stroke-width=".3">A</text><path d="M10.5 2.5h2v7.5h2.5l-3.5 4-3.5-4h2.5z" fill="#f26a1b" stroke="#b02a08" stroke-width=".9" stroke-linejoin="round"/></g>
<g transform="translate(604,70)"><path d="M0.5 1v14.5h15.5" stroke="#2b2f33" fill="none"/><rect x="3" y="6" width="3.4" height="8" fill="#3a73b0" stroke="#203f63" stroke-width=".8"/><rect x="7" y="1.5" width="3.4" height="12.5" fill="#f26b1c" stroke="#a8380a" stroke-width=".8"/><rect x="11" y="7.5" width="3.6" height="6.5" fill="#f6d23c" stroke="#a88310" stroke-width=".8"/></g>
<g transform="translate(629,70)"><path d="M1 9c2-3 5-1 2 2s0 4 3 2" stroke="#1f77d0" stroke-width="1.5" fill="none"/><path d="M6 12L13 4" stroke="#6b4a12" stroke-width="4.8" stroke-linecap="butt"/><path d="M6 12L13 4" stroke="#f5c92e" stroke-width="3.6" stroke-linecap="butt"/><path d="M4.5 14l1.3-3.3 2.2 2.2z" fill="#f4e7c8" stroke="#555" stroke-width=".5"/><circle cx="14" cy="3" r="2" fill="#e5647a"/></g>
<g transform="translate(662,70)"><rect x="3" y="0.5" width="3" height="3" fill="#2a2c2e"/><rect x="10" y="0.5" width="3" height="3" fill="#2a2c2e"/><rect x="5" y="4" width="6" height="3" fill="#2a2c2e"/><path d="M1.5 4h5.5v11.5h-6.5v-7z" fill="url(#gbino)" stroke="#2a2c2e"/><path d="M14.5 4h-5.5v11.5h6.5v-7z" fill="url(#gbino)" stroke="#2a2c2e"/></g>
<g transform="translate(687,70)"><circle cx="8" cy="8" r="7.3" fill="#f7f8f9" stroke="#7b8590" stroke-width="1.3"/><circle cx="8" cy="8" r="5.8" fill="none" stroke="#c8ced4" stroke-width=".6" stroke-dasharray="1 1.4"/><path d="M12.5 3.5L9.3 9.3 6.7 6.7z" fill="#2e6ee0"/><path d="M3.5 12.5L6.7 6.7 9.3 9.3z" fill="#e0261c"/></g>
<g transform="translate(712,70)"><path d="M5 3.5L8 0.5 11 3.5" stroke="#777" fill="none" stroke-width=".8"/><rect x="0.5" y="3.5" width="15.5" height="12" fill="#d58a1a" stroke="#6b3c06"/><rect x="2.5" y="5.5" width="11.5" height="8" fill="#6bb0e8" stroke="#8a5a10" stroke-width=".6"/><path d="M2.5 13.5v-3c3-2 6 0 11.5-1.5v4.5z" fill="#4f9a2a"/></g>
<g transform="translate(737,70)"><path d="M1.5 9.399999999999999v3.1999999999999997a6.5 2.2 0 0 0 13 0v-3.1999999999999997" fill="url(#gdb)" stroke="#3b3f44" stroke-width=".9"/><path d="M1.5 6.199999999999999v3.1999999999999997a6.5 2.2 0 0 0 13 0v-3.1999999999999997" fill="url(#gdb)" stroke="#3b3f44" stroke-width=".9"/><path d="M1.5 3.0v3.1999999999999997a6.5 2.2 0 0 0 13 0v-3.1999999999999997" fill="url(#gdb)" stroke="#3b3f44" stroke-width=".9"/><ellipse cx="8.0" cy="3.0" rx="6.5" ry="2.2" fill="#f2f3f4" stroke="#3b3f44" stroke-width=".9"/></g>
<g transform="translate(762,70)"><path d="M6 6L14 14" stroke="#6d4d0e" stroke-width="3.4" stroke-linecap="round"/><path d="M6 6L14 14" stroke="#d8a520" stroke-width="2" stroke-linecap="round"/><circle cx="6" cy="6" r="4.8" fill="#c7dcef" stroke="#4d5a66" stroke-width="1.3"/><path d="M3.36 5.52a2.88 2.88 0 0 1 2.4 -2.16" stroke="#fff" stroke-width="1" fill="none"/></g>
<g transform="translate(795,70)"><circle cx="8" cy="8" r="7.6" fill="#1f5fbf" stroke="#0d2f73"/><path d="M4 4 a5 5 0 0 1 8 0" stroke="#7ab0f0" stroke-width="1" fill="none"/><text x="8" y="13" font-family="Liberation Sans" font-weight="700" font-size="12.5" fill="#fff" text-anchor="middle">?</text></g>
<g transform="translate(18,101)"><path d="M4.5 0.5h10v9l-3.5 3.5h-6.5z" fill="#dfe6ee" stroke="#5b6670"/><path d="M14.5 9.5h-3.5v3.5" fill="#fff" stroke="#5b6670"/><rect x="0.5" y="4.5" width="8" height="10" fill="#d0d8e0" stroke="#4b5660"/><path d="M4.5 6v7M2.5 8h4v2h-4z" stroke="#222" stroke-width="1" fill="none"/></g>
<text x="319" y="115" font-family="Liberation Sans" font-weight="700" font-size="17.5" fill="#1d3349">F</text>
<text x="340" y="115" font-family="Liberation Serif" font-style="italic" font-weight="700" font-size="18" fill="#1d3349">K</text>
<text x="368.5" y="114.3" font-family="Liberation Sans" font-size="16.5" fill="#1d3349">U</text><rect x="368.0" y="114.89999999999999" width="12.5" height="1.2" fill="#1d3349"/>
<g transform="translate(401,105)"><rect x="0" y="0" width="12" height="1.4" rx=".6" fill="#26313c"/><rect x="0" y="2" width="9" height="1.4" rx=".6" fill="#26313c"/><rect x="0" y="4" width="12" height="1.4" rx=".6" fill="#26313c"/><rect x="0" y="6" width="9" height="1.4" rx=".6" fill="#26313c"/><rect x="0" y="8" width="12" height="1.4" rx=".6" fill="#26313c"/></g>
<g transform="translate(426,105)"><rect x="0.0" y="0" width="12" height="1.4" rx=".6" fill="#26313c"/><rect x="3.0" y="2" width="6" height="1.4" rx=".6" fill="#26313c"/><rect x="0.0" y="4" width="12" height="1.4" rx=".6" fill="#26313c"/><rect x="3.0" y="6" width="6" height="1.4" rx=".6" fill="#26313c"/><rect x="0.0" y="8" width="12" height="1.4" rx=".6" fill="#26313c"/></g>
<g transform="translate(451,105)"><rect x="0" y="0" width="12" height="1.4" rx=".6" fill="#26313c"/><rect x="3" y="2" width="9" height="1.4" rx=".6" fill="#26313c"/><rect x="0" y="4" width="12" height="1.4" rx=".6" fill="#26313c"/><rect x="3" y="6" width="9" height="1.4" rx=".6" fill="#26313c"/><rect x="0" y="8" width="12" height="1.4" rx=".6" fill="#26313c"/></g>
<g transform="translate(476,105)"><rect x="0.0" y="0" width="12" height="1.4" rx=".6" fill="#26313c"/><rect x="0.0" y="2" width="12" height="1.4" rx=".6" fill="#26313c"/><rect x="0.0" y="4" width="12" height="1.4" rx=".6" fill="#26313c"/><rect x="0.0" y="6" width="12" height="1.4" rx=".6" fill="#26313c"/><rect x="0.0" y="8" width="12" height="1.4" rx=".6" fill="#26313c"/></g>
<g transform="translate(499,103)"><rect x="0.5" y="0.5" width="15" height="12" fill="#f2f4f6" stroke="#7d8892"/><path d="M5.5 0.5v12" stroke="#b7c0c8"/><path d="M10.5 0.5v12" stroke="#b7c0c8"/><path d="M0.5 3.5h15" stroke="#b7c0c8"/><path d="M0.5 6.5h15" stroke="#b7c0c8"/><path d="M0.5 9.5h15" stroke="#b7c0c8"/><rect x="5" y="3.5" width="10.5" height="3.4" fill="#f6d33c" stroke="#e08a12" stroke-width=".8"/></g>
<g transform="translate(532,101)"><ellipse cx="4" cy="13" rx="3.6" ry="1.5" fill="#f0b93a" stroke="#9a6508" stroke-width=".8"/><ellipse cx="7" cy="12" rx="3.6" ry="1.5" fill="#f0b93a" stroke="#9a6508" stroke-width=".8"/><ellipse cx="9" cy="12.5" rx="3" ry="1.4" fill="#f2c040" stroke="#9a6508" stroke-width=".8"/><ellipse cx="9" cy="10.5" rx="3" ry="1.4" fill="#f2c040" stroke="#9a6508" stroke-width=".8"/><ellipse cx="9" cy="8.5" rx="3" ry="1.4" fill="#f2c040" stroke="#9a6508" stroke-width=".8"/><ellipse cx="9" cy="6.5" rx="3" ry="1.4" fill="#f2c040" stroke="#9a6508" stroke-width=".8"/><ellipse cx="9" cy="4.5" rx="3" ry="1.4" fill="#f2c040" stroke="#9a6508" stroke-width=".8"/><ellipse cx="9" cy="2.5" rx="3" ry="1.4" fill="#f2c040" stroke="#9a6508" stroke-width=".8"/><ellipse cx="13" cy="13.5" rx="3" ry="1.4" fill="#f2c040" stroke="#9a6508" stroke-width=".8"/><ellipse cx="13" cy="11.5" rx="3" ry="1.4" fill="#f2c040" stroke="#9a6508" stroke-width=".8"/><ellipse cx="13" cy="9.5" rx="3" ry="1.4" fill="#f2c040" stroke="#9a6508" stroke-width=".8"/><ellipse cx="13" cy="7.5" rx="3" ry="1.4" fill="#f2c040" stroke="#9a6508" stroke-width=".8"/></g>
<text x="558" y="115" font-family="Liberation Sans" font-weight="700" font-size="14" fill="#26384a">%</text>
<g transform="translate(582,101)"><text x="0" y="8.3" font-family="Liberation Sans" font-weight="700" font-size="10.5" fill="#26384a">$</text><text x="6" y="8.3" font-family="Liberation Sans" font-weight="700" font-size="10.5" fill="#26384a">%</text><path d="M3 12.5l3.5-3.5v2h5v3h-5v2z" fill="#6fb0ee" stroke="#1f5b98" stroke-width=".8"/></g>
<g transform="translate(607,101)"><path d="M2.5 0.5h2v2h2v2h-2v2h-2v-2h-2v-2h2z" fill="#7cc23a" stroke="#2e7a12" stroke-width=".8"/><text x="9.5" y="8" font-family="Liberation Sans" font-weight="700" font-size="6.5" fill="#2a6fd0">0</text><text x="0" y="15" font-family="Liberation Sans" font-weight="700" font-size="7" fill="#3b4650" textLength="16" lengthAdjust="spacingAndGlyphs">.000</text></g>
<g transform="translate(632,101)"><text x="0.5" y="8" font-family="Liberation Sans" font-weight="700" font-size="6.5" fill="#3b4650">0</text><path d="M7 1L15 9M15 1L7 9" stroke="#e0201c" stroke-width="2.2"/><text x="0" y="15" font-family="Liberation Sans" font-weight="700" font-size="7" fill="#3b4650" textLength="16" lengthAdjust="spacingAndGlyphs">.000</text><rect x="12.2" y="10" width="4" height="5.5" fill="#fff"/><text x="12" y="15" font-family="Liberation Sans" font-weight="700" font-size="7" fill="#2a6fd0">0</text></g>
<g transform="translate(665,103)"><path d="M6 0.5h10M6 13.5h10" stroke="#2b3036" stroke-width="1"/><path d="M9 -1v3M9 12v3" stroke="#2b3036" stroke-width="1"/><rect x="10" y="4" width="6" height="1.6" fill="#1f7ad8"/><rect x="10" y="7.5" width="6" height="1.6" fill="#1f7ad8"/><path d="M0.5 6.5l3.5-3.5v2h4.5v3h-4.5v2z" fill="#f26a1b" stroke="#a8300a" stroke-width=".8"/></g>
<g transform="translate(690,103)"><path d="M6 0.5h10M6 13.5h10" stroke="#2b3036" stroke-width="1"/><path d="M9 -1v3M9 12v3" stroke="#2b3036" stroke-width="1"/><rect x="10" y="4" width="6" height="1.6" fill="#1f7ad8"/><rect x="10" y="7.5" width="6" height="1.6" fill="#1f7ad8"/><path d="M8.5 6.5l-3.5-3.5v2h-4.5v3h4.5v2z" fill="#f26a1b" stroke="#a8300a" stroke-width=".8"/></g>
<g transform="translate(723.5,102.5)"><rect x="1" y="1" width="11" height="11" fill="url(#gbord)" stroke="#26313c" stroke-width="1.8"/></g>
<g transform="translate(757.5,100.5)"><path d="M2 6l5-4 6 6-4 4z" fill="url(#gbuck)" stroke="#4b5058" stroke-width=".9"/><ellipse cx="4.5" cy="3" rx="2.8" ry="1.6" fill="#e8eaec" stroke="#4b5058" stroke-width=".8"/><path d="M11 3c2 0 3 2 3 9" stroke="#1f7ad8" stroke-width="1.8" fill="none"/><rect x="0.5" y="13.5" width="15.5" height="3" fill="#fff" stroke="#000"/></g>
<g transform="translate(794,101)"><text x="8" y="10.5" font-family="Liberation Sans" font-weight="700" font-size="13.5" fill="#3a7ab8" stroke="#183a5e" stroke-width="1" text-anchor="middle">A</text><rect x="0.5" y="12.5" width="15.5" height="3" fill="#fff" stroke="#000"/></g>
<g transform="translate(19,134)"><path d="M1.5 1.5h12l1 1v12h-13z" fill="#e8eaec" stroke="#c4c8cc"/><path d="M1.5 1.5l5 5-5 5z" fill="#f4f5f6" stroke="#c4c8cc"/><rect x="4" y="10" width="2.5" height="4" fill="#fff" stroke="#c4c8cc" stroke-width=".6"/><rect x="8" y="10" width="2.5" height="4" fill="#fff" stroke="#c4c8cc" stroke-width=".6"/></g>
<g transform="translate(53,134)"><path d="M0.5 0.5h9l3 3v11h-12z" fill="#f4f5f6" stroke="#c4c8cc" stroke-width="1"/><path d="M9.5 0.5v3h3" fill="#dfe4ea" stroke="#c4c8cc" stroke-width="1"/><rect x="2" y="7" width="4" height="1" fill="#ccd2d8"/><rect x="2" y="9" width="4" height="1" fill="#ccd2d8"/><rect x="2" y="11" width="3" height="1" fill="#ccd2d8"/><path d="M6 12L14 4" stroke="#c4c8cc" stroke-width="3.6"/><path d="M6 12L14 4" stroke="#eef0f2" stroke-width="2"/></g>
<g transform="translate(86,134)"><path d="M1 1L11 10M15 1L5 10" stroke="#c4c8cc" stroke-width="1.4"/><path d="M9.5 8.5L13.5 12.5M6.5 8.5L2.5 12.5" stroke="#d0d4d8" stroke-width="3"/><circle cx="3.3" cy="12.3" r="2.5" fill="#eceef0" stroke="#c4c8cc" stroke-width=".9"/><circle cx="12.7" cy="12.3" r="2.5" fill="#eceef0" stroke="#c4c8cc" stroke-width=".9"/></g>
<g transform="translate(110,134)"><path d="M0.5 0.5h5l3 3v6h-8z" fill="#f4f6f8" stroke="#5b6670" stroke-width="1"/><path d="M5.5 0.5v3h3" fill="#dfe4ea" stroke="#5b6670" stroke-width="1"/><rect x="2" y="4" width="5" height="1" fill="#2a6fb8"/><rect x="2" y="6" width="3" height="1" fill="#2a6fb8"/><rect x="2" y="8" width="5" height="1" fill="#2a6fb8"/><path d="M6.5 5.5h5l3 3v6h-8z" fill="#f4f6f8" stroke="#5b6670" stroke-width="1"/><path d="M11.5 5.5v3h3" fill="#dfe4ea" stroke="#5b6670" stroke-width="1"/><rect x="8" y="9" width="5" height="1" fill="#2a6fb8"/><rect x="8" y="11" width="3" height="1" fill="#2a6fb8"/><rect x="8" y="13" width="5" height="1" fill="#2a6fb8"/></g>
<g transform="translate(136,134)"><path d="M1.5 0.5h9l3 3v11h-12z" fill="#f6f7f8" stroke="#c8ccd0" stroke-width="1"/><path d="M10.5 0.5v3h3" fill="#dfe4ea" stroke="#c8ccd0" stroke-width="1"/><rect x="3" y="4" width="9" height="1" fill="#d8dce0"/><rect x="3" y="6" width="7" height="1" fill="#d8dce0"/><rect x="3" y="8" width="9" height="1" fill="#d8dce0"/><rect x="3" y="10" width="7" height="1" fill="#d8dce0"/><rect x="3" y="12" width="9" height="1" fill="#d8dce0"/></g>
<g transform="translate(161,134)"><rect x="0.5" y="2.5" width="12" height="11" rx="1" fill="#e4e6e8" stroke="#c4c8cc"/><path d="M4 3.5l2.5-2.5 2.5 2.5z" fill="#f0f0f0" stroke="#c4c8cc"/><path d="M7.5 5.5h5l3 3v7h-8z" fill="#f6f7f8" stroke="#c4c8cc" stroke-width="1"/><path d="M12.5 5.5v3h3" fill="#dfe4ea" stroke="#c4c8cc" stroke-width="1"/><rect x="9" y="9" width="5" height="1" fill="#d0d5da"/><rect x="9" y="11" width="3" height="1" fill="#d0d5da"/><rect x="9" y="13" width="5" height="1" fill="#d0d5da"/></g>
<g transform="translate(193,134)"><path d="M1.5 4.5v6h6l-2-2c3-2.5 7-0.5 6.5 2.5c-.4 2.5-3 4-6 3v2c4.5 1 8.5-1.5 8.5-5.5c0-5-6.5-7.5-10.5-4z" fill="#e7e9eb" stroke="#c6cacd" stroke-width="1.1" stroke-linejoin="round"/></g>
<g transform="translate(227,134)"><rect x="3" y="0.5" width="3" height="3" fill="#2a2c2e"/><rect x="10" y="0.5" width="3" height="3" fill="#2a2c2e"/><rect x="5" y="4" width="6" height="3" fill="#2a2c2e"/><path d="M1.5 4h5.5v11.5h-6.5v-7z" fill="url(#gbino)" stroke="#2a2c2e"/><path d="M14.5 4h-5.5v11.5h6.5v-7z" fill="url(#gbino)" stroke="#2a2c2e"/></g>
<g transform="translate(260,134)"><path d="M1.5 7c0-4 4-6 7.5-5.5l1-2 4.5 4.5-5.5 1.5 1-2c-2.5-.5-5 1-5 3.5z" fill="#7ab4e6" stroke="#1f5b98" stroke-width=".9" stroke-linejoin="round"/><path d="M14.5 9c0 4-4 6-7.5 5.5l-1 2-4.5-4.5 5.5-1.5-1 2c2.5.5 5-1 5-3.5z" fill="#7ab4e6" stroke="#1f5b98" stroke-width=".9" stroke-linejoin="round"/></g>
<g transform="translate(297,134)"><text x="0.3" y="6.3" font-family="Liberation Sans" font-weight="700" font-size="8.2" fill="#1f6fc8" stroke="#1f6fc8" stroke-width=".3">A</text><text x="0.3" y="15.4" font-family="Liberation Sans" font-weight="700" font-size="8.2" fill="#5b6268" stroke="#5b6268" stroke-width=".3">Z</text></g>
<g transform="translate(318,134)"><text x="0.3" y="6.3" font-family="Liberation Sans" font-weight="700" font-size="8.2" fill="#1f6fc8" stroke="#1f6fc8" stroke-width=".3">A</text><text x="0.3" y="15.4" font-family="Liberation Sans" font-weight="700" font-size="8.2" fill="#5b6268" stroke="#5b6268" stroke-width=".3">Z</text><path d="M10.5 2.5h2v7.5h2.5l-3.5 4-3.5-4h2.5z" fill="#f26a1b" stroke="#b02a08" stroke-width=".9" stroke-linejoin="round"/></g>
<g transform="translate(344,134)"><text x="0.3" y="6.3" font-family="Liberation Sans" font-weight="700" font-size="8.2" fill="#1f6fc8" stroke="#1f6fc8" stroke-width=".3">Z</text><text x="0.3" y="15.4" font-family="Liberation Sans" font-weight="700" font-size="8.2" fill="#5b6268" stroke="#5b6268" stroke-width=".3">A</text><path d="M10.5 2.5h2v7.5h2.5l-3.5 4-3.5-4h2.5z" fill="#f26a1b" stroke="#b02a08" stroke-width=".9" stroke-linejoin="round"/></g>
<g transform="translate(376,134)"><path d="M0.5 5.5h14l-5 5.5v6h-4v-6z" fill="#f4f6f8" stroke="#4b5660" stroke-width="1.2" stroke-linejoin="round"/><path d="M7 6L15 15" stroke="#111" stroke-width="2"/><path d="M7 6L9 8" stroke="#fff" stroke-width="1.6"/><path d="M3 2l1 1.5 1.5 1-1.5 1-1 1.5-1-1.5-1.5-1 1.5-1z" fill="#f2c12e"/><path d="M8.5 0l.6 1 1 .6-1 .6-.6 1-.6-1-1-.6 1-.6z" fill="#f2c12e"/><path d="M13 2l.6 1 1 .6-1 .6-.6 1-.6-1-1-.6 1-.6z" fill="#f2c12e"/><path d="M15.5 6l.5 .8.8.5-.8.5-.5.8-.5-.8-.8-.5.8-.5z" fill="#f2c12e"/></g>
<g transform="translate(401,134)"><path d="M0.5 5.5h14l-5 5.5v6h-4v-6z" fill="#f4f5f6" stroke="#cdd1d5" stroke-width="1.2" stroke-linejoin="round"/><path d="M6 6l3 3 6-7" stroke="#cdd1d5" stroke-width="2.2" fill="none"/></g>
<g transform="translate(427,134)"><path d="M0.5 3.5h14l-5 5.5v6h-4v-6z" fill="url(#gfun)" stroke="#2b3036" stroke-width="1.2" stroke-linejoin="round"/></g>
<g transform="translate(459,134)"><path d="M0.5 5.5h14l-5 5.5v6h-4v-6z" fill="#f4f5f6" stroke="#cdd1d5" stroke-width="1.2" stroke-linejoin="round"/><path d="M7 1L15 9M15 1L7 9" stroke="#c4c8cc" stroke-width="2.4"/></g>
<g transform="translate(492,134)"><path d="M4 4.5h12" stroke="#222" stroke-width="1.2"/><path d="M4 7h12" stroke="#222" stroke-width="1.2"/><path d="M4 9.5h12" stroke="#222" stroke-width="1.2"/><path d="M4 12h12" stroke="#222" stroke-width="1.2"/><path d="M4 14.5h12" stroke="#222" stroke-width="1.2"/><rect x="9" y="9" width="7" height="3.5" fill="#8fc43a" stroke="#2e7a12" stroke-width=".8"/><path d="M2.5 0.5h2v2h2v2h-2v2h-2v-2h-2v-2h2z" fill="#7cc23a" stroke="#2e7a12" stroke-width=".9"/></g>
<g transform="translate(517,134)"><path d="M4 4.5h12" stroke="#c4c8cc" stroke-width="1.2"/><path d="M4 7h12" stroke="#c4c8cc" stroke-width="1.2"/><path d="M4 12h12" stroke="#c4c8cc" stroke-width="1.2"/><path d="M4 14.5h12" stroke="#c4c8cc" stroke-width="1.2"/><rect x="6" y="8.5" width="6" height="3.5" fill="#dde0e3"/><path d="M2.5 0.5h2v2h2v2h-2v2h-2v-2h-2v-2h2z" fill="#eef0f2" stroke="#c4c8cc" stroke-width=".9"/></g>
<g transform="translate(541,134)"><path d="M0.5 0.5h6l3 3v8h-9z" fill="#f6f7f8" stroke="#c8ccd0" stroke-width="1"/><path d="M6.5 0.5v3h3" fill="#dfe4ea" stroke="#c8ccd0" stroke-width="1"/><rect x="2" y="4" width="6" height="1" fill="#d8dce0"/><rect x="2" y="6" width="4" height="1" fill="#d8dce0"/><rect x="2" y="8" width="6" height="1" fill="#d8dce0"/><rect x="2" y="10" width="4" height="1" fill="#d8dce0"/><rect x="4.5" y="7.5" width="11" height="8" fill="#f0f1f2" stroke="#c4c8cc"/><path d="M5 8l5.5 4 5-4" stroke="#c4c8cc" fill="none"/></g>
<g transform="translate(566,134)"><path d="M2.5 9.433333333333334v3.3666666666666667a6.5 2.2 0 0 0 13 0v-3.3666666666666667" fill="url(#gdb)" stroke="#3b3f44" stroke-width=".9"/><path d="M2.5 6.066666666666666v3.3666666666666667a6.5 2.2 0 0 0 13 0v-3.3666666666666667" fill="url(#gdb)" stroke="#3b3f44" stroke-width=".9"/><path d="M2.5 2.7v3.3666666666666667a6.5 2.2 0 0 0 13 0v-3.3666666666666667" fill="url(#gdb)" stroke="#3b3f44" stroke-width=".9"/><ellipse cx="9.0" cy="2.7" rx="6.5" ry="2.2" fill="#f2f3f4" stroke="#3b3f44" stroke-width=".9"/><path d="M0.5 9c0 3 2 4.5 5 4.5v-2l4 3.3-4 3.2v-2c-4 0-6-2.5-6-7z" fill="#8fd03a" stroke="#2e7a12" stroke-width=".9" stroke-linejoin="round" transform="translate(0,-2)"/></g>
<g transform="translate(592,134)"><rect x="0.5" y="0.5" width="15" height="14" fill="#f2f4f6" stroke="#4b5660"/><rect x="1" y="1" width="14" height="2.2" fill="#2a6fd0"/><path d="M1 6h3v-2l4 3.5-4 3.5v-2h-3z" fill="#8fd03a" stroke="#2e7a12" stroke-width=".8" stroke-linejoin="round"/><path d="M15 11h-3v-2l-4 3.5 4 3.5v-2h3z" fill="#8fd03a" stroke="#2e7a12" stroke-width=".8" stroke-linejoin="round"/></g>
<g transform="translate(24,166)"><path d="M2.5 7.266666666666667v2.533333333333333a6.0 2.2 0 0 0 12 0v-2.533333333333333" fill="url(#gdb)" stroke="#3b3f44" stroke-width=".9"/><path d="M2.5 4.733333333333333v2.533333333333333a6.0 2.2 0 0 0 12 0v-2.533333333333333" fill="url(#gdb)" stroke="#3b3f44" stroke-width=".9"/><path d="M2.5 2.2v2.533333333333333a6.0 2.2 0 0 0 12 0v-2.533333333333333" fill="url(#gdb)" stroke="#3b3f44" stroke-width=".9"/><ellipse cx="8.5" cy="2.2" rx="6.0" ry="2.2" fill="#f2f3f4" stroke="#3b3f44" stroke-width=".9"/><path d="M0.5 10.5l3-3v2h5v2h-5v2z" fill="#5aa8ee" stroke="#1f4f8c" stroke-width=".8" stroke-linejoin="round"/><path d="M15.5 13l-3-3v2h-5v2h5v2z" fill="#f2b33a" stroke="#9d5b0b" stroke-width=".8" stroke-linejoin="round"/></g>
<g transform="translate(24,189.5)"><path d="M2.5 7.266666666666667v2.533333333333333a6.0 2.2 0 0 0 12 0v-2.533333333333333" fill="url(#gdb)" stroke="#3b3f44" stroke-width=".9"/><path d="M2.5 4.733333333333333v2.533333333333333a6.0 2.2 0 0 0 12 0v-2.533333333333333" fill="url(#gdb)" stroke="#3b3f44" stroke-width=".9"/><path d="M2.5 2.2v2.533333333333333a6.0 2.2 0 0 0 12 0v-2.533333333333333" fill="url(#gdb)" stroke="#3b3f44" stroke-width=".9"/><ellipse cx="8.5" cy="2.2" rx="6.0" ry="2.2" fill="#f2f3f4" stroke="#3b3f44" stroke-width=".9"/><path d="M0.5 10.5l3-3v2h5v2h-5v2z" fill="#5aa8ee" stroke="#1f4f8c" stroke-width=".8" stroke-linejoin="round"/><path d="M15.5 13l-3-3v2h-5v2h5v2z" fill="#f2b33a" stroke="#9d5b0b" stroke-width=".8" stroke-linejoin="round"/></g>
<g transform="translate(44,212)"><path d="M0.5 1.5h5l1 1.5h8.5v11.5h-14.5z" fill="#f3c53a" stroke="#9a5a08"/><rect x="2.5" y="5.5" width="11" height="7" fill="#e8f0f8" stroke="#5b6670" stroke-width=".8"/><rect x="5.5" y="8.5" width="8" height="6" fill="#dfe6ee" stroke="#5b6670" stroke-width=".8"/><rect x="8" y="10.5" width="3" height="2" fill="#2a6fd0"/></g>
<g transform="translate(64,235)"><rect x="4.5" y="0.5" width="11" height="10" fill="#f4f6f8" stroke="#6b7680"/><rect x="0.5" y="4.5" width="11" height="10.5" fill="#eef1f4" stroke="#6b7680"/><path d="M2 7h8M2 9.5h8M2 12h8M6 6v8" stroke="#9aa6b0" stroke-width=".8"/><rect x="6.5" y="7.5" width="3" height="4" fill="#2a6fd0"/></g>
<g transform="translate(64,258)"><rect x="4.5" y="0.5" width="11" height="10" fill="#f4f6f8" stroke="#6b7680"/><rect x="0.5" y="4.5" width="11" height="10.5" fill="#eef1f4" stroke="#6b7680"/><path d="M2 7h8M2 9.5h8M2 12h8M6 6v8" stroke="#9aa6b0" stroke-width=".8"/><rect x="6.5" y="7.5" width="3" height="4" fill="#2a6fd0"/></g>
<g transform="translate(44,281)"><path d="M0.5 1.5h5l1 1.5h8.5v11.5h-14.5z" fill="#f3c53a" stroke="#9a5a08"/><rect x="3.5" y="5.5" width="12" height="10" fill="#eef2f6" stroke="#4b5660" stroke-width=".9"/><rect x="4" y="6" width="11" height="2" fill="#3a7ad0"/><path d="M4 10.5h11M4 13h11M9.5 8v7" stroke="#7d8892" stroke-width=".8"/></g>
<g transform="translate(174,318)"><text x="0.5" y="12.5" font-family="Liberation Serif" font-style="italic" font-weight="700" font-size="16" fill="#26384a">f</text><text x="8.5" y="13.5" font-family="Liberation Sans" font-weight="700" font-size="10" fill="#26384a" stroke="#26384a" stroke-width=".3">x</text><path d="M3 1.5l1 1.5 1.5 1-1.5 1-1 1.5-1-1.5-1.5-1 1.5-1z" fill="#f5c220"/><path d="M8 0l.8 1.2 1.2.8-1.2.8-.8 1.2-.8-1.2-1.2-.8 1.2-.8z" fill="#f5c220"/><path d="M12 1.5l.7 1 1 .7-1 .7-.7 1-.7-1-1-.7 1-.7z" fill="#f5c220"/><path d="M15 5.5l.6 .9.9 .6-.9 .6-.6 .9-.6-.9-.9-.6.9-.6z" fill="#f5c220"/></g>
<g transform="translate(200,319)"><path d="M1.5 1.5h11v3h-2.5v-.5h-5l4 4-4 4h5v-.5h2.5v3h-11v-2l4.5-4.5-4.5-4.5z" fill="#72c4fa" stroke="#0d57a8" stroke-width="1.3" stroke-linejoin="round"/></g>
</svg>
</body></html>
